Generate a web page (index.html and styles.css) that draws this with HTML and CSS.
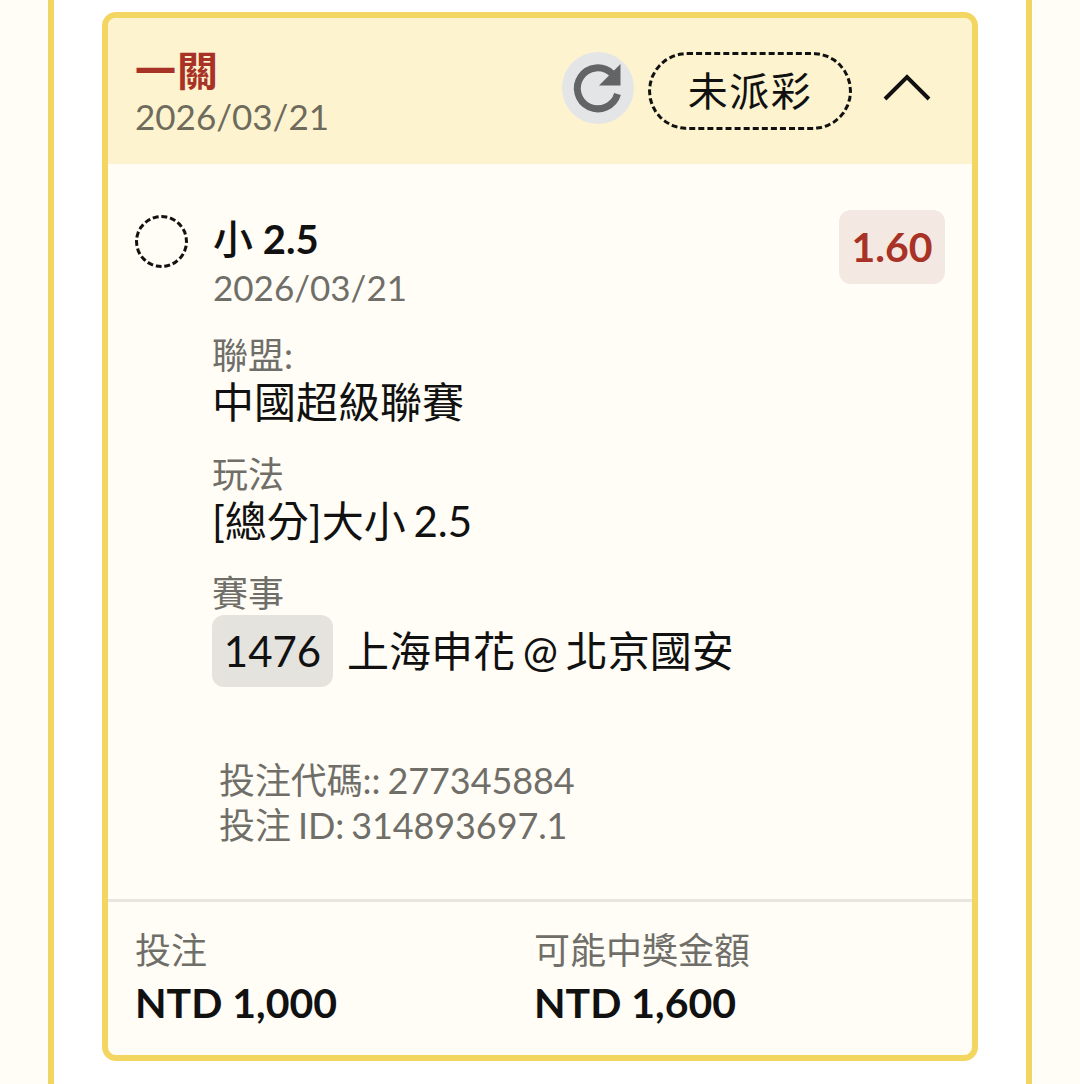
FILE: index.html

```html
<!DOCTYPE html>
<html lang="zh-Hant">
<head>
  <meta charset="UTF-8">
  <meta name="viewport" content="width=device-width, initial-scale=1.0">
  <title>投注紀錄</title>
  <link rel="stylesheet" href="styles.css">
</head>
<body>
  <div class="panel">
    <div class="card">
      <div class="card-head">
        <div class="head-text">
          <div class="head-title">一關</div>
          <div class="head-date">2026/03/21</div>
        </div>
        <div class="head-tools">
          <div class="refresh">
            <svg width="60" height="60" viewBox="0 0 60 60">
              <path d="M49.500 36a20.500 20.500 0 1 1-5.500-20.500" fill="none" stroke="#636466" stroke-width="7"/>
              <path d="M52.500 6V27.500H31z" fill="#636466"/>
            </svg>
          </div>
          <div class="status">未派彩</div>
          <svg class="chevron" width="48" height="30" viewBox="0 0 48 30">
            <path d="M2 27L24 5l22 22" fill="none" stroke="#111" stroke-width="4"/>
          </svg>
        </div>
      </div>

      <div class="card-body">
        <div class="pick">
          <div class="pick-dot"></div>
          <div class="pick-main">
            <div class="pick-name"><span class="pick-cjk">小</span> 2.5</div>
            <div class="pick-date">2026/03/21</div>
          </div>
          <div class="odds">1.60</div>
        </div>

        <div class="info">
          <div class="info-row">
            <div class="info-label">聯盟:</div>
            <div class="info-value">中國超級聯賽</div>
          </div>
          <div class="info-row">
            <div class="info-label">玩法</div>
            <div class="info-value">[總分]大小 2.5</div>
          </div>
          <div class="info-row">
            <div class="info-label">賽事</div>
            <div class="info-value match">
              <span class="match-no">1476</span>
              <span>上海申花 @ 北京國安</span>
            </div>
          </div>
        </div>

        <div class="codes">
          <div>投注代碼:: 277345884</div>
          <div>投注 ID: 314893697.1</div>
        </div>
      </div>

      <div class="card-foot">
        <div class="foot-col">
          <div class="foot-label">投注</div>
          <div class="foot-value">NTD 1,000</div>
        </div>
        <div class="foot-col">
          <div class="foot-label">可能中獎金額</div>
          <div class="foot-value">NTD 1,600</div>
        </div>
      </div>
    </div>
  </div>
</body>
</html>
```

FILE: styles.css

```css
body {
  margin: 0;
  height: 1084px;
  overflow: hidden;
  background-color: #fffdf6;
  font-family: Lato, "Noto Sans CJK TC", sans-serif;
  color: #111;
}
.panel {
  margin: 0 48px;
  height: 1084px;
  box-sizing: border-box;
  padding: 12px 48px 0;
  background-color: #fff;
  border-left: 6px solid #f3d661;
  border-right: 6px solid #f3d661;
}
.card {
  height: 1049px;
  box-sizing: border-box;
  border: 6px solid #f3d661;
  border-radius: 14px;
  background-color: #fffdf6;
  display: flex;
  flex-direction: column;
  overflow: hidden;
}
.card-head {
  height: 146px;
  flex: none;
  box-sizing: border-box;
  padding: 30px 41px 0 27px;
  background-color: #fdf3cf;
  display: flex;
  justify-content: space-between;
}
.head-title {
  font-size: 41px;
  line-height: 46px;
  font-weight: 700;
  color: #a93226;
  letter-spacing: 1px;
}
.head-date {
  font-size: 35px;
  line-height: 44px;
  color: #6f6b5c;
}
.head-tools {
  display: flex;
  align-items: center;
  height: 80px;
}
.refresh {
  width: 72px;
  height: 72px;
  border-radius: 50%;
  background-color: #e3e5e6;
  display: flex;
  align-items: center;
  justify-content: center;
}
.status {
  width: 204px;
  height: 78px;
  margin-left: 14px;
  margin-top: 6px;
  box-sizing: border-box;
  border: 3px dashed #111;
  border-radius: 39px;
  font-size: 40px;
  line-height: 72px;
  letter-spacing: 1.5px;
  text-align: center;
}
.chevron {
  margin-left: 31px;
  margin-bottom: 2px;
}
.card-body {
  flex: 1;
  padding: 46px 27px 0;
}
.pick {
  display: flex;
  align-items: flex-start;
}
.pick-dot {
  width: 53px;
  height: 53px;
  margin-top: 5px;
  box-sizing: border-box;
  border: 3px dashed #111;
  border-radius: 50%;
  flex: none;
}
.pick-main {
  flex: 1;
  margin-left: 25px;
  padding-top: 3px;
}
.pick-name {
  font-size: 40px;
  line-height: 52px;
  font-weight: 700;
}
.pick-cjk {
  font-weight: 500;
}
.pick-date {
  font-size: 35px;
  line-height: 44px;
  color: #6f6e68;
}
.odds {
  width: 106px;
  height: 74px;
  border-radius: 12px;
  background-color: #f3e9e2;
  color: #a93226;
  font-size: 41px;
  font-weight: 700;
  line-height: 74px;
  text-align: center;
}
.info {
  margin-left: 77px;
  margin-top: 24px;
}
.info-row {
  margin-bottom: 26px;
}
.info-label {
  font-size: 36px;
  line-height: 45px;
  color: #6f6e68;
}
.info-value {
  font-size: 42px;
  line-height: 48px;
  word-spacing: -3px;
}
.match {
  display: flex;
  align-items: center;
  gap: 14px;
  margin-top: -1px;
}
.match-no {
  width: 121px;
  height: 72px;
  border-radius: 12px;
  background-color: #e5e3de;
  line-height: 72px;
  text-align: center;
}
.codes {
  margin: 71px 0 0 84px;
  font-size: 36px;
  line-height: 45px;
  color: #6f6e68;
  word-spacing: -2px;
  letter-spacing: -0.1px;
}
.card-foot {
  height: 156px;
  flex: none;
  box-sizing: border-box;
  padding: 26px 27px 0;
  border-top: 3px solid #e8e6e0;
  display: flex;
}
.foot-col {
  width: 399px;
}
.foot-label {
  font-size: 36px;
  line-height: 44px;
  color: #6f6e68;
}
.foot-value {
  font-size: 41px;
  line-height: 62px;
  font-weight: 700;
}
```
